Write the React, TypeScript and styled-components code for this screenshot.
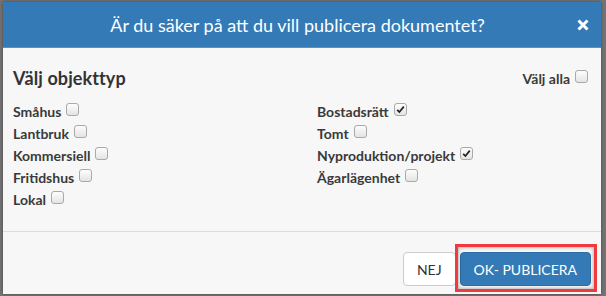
import React from "react";
import styled, { createGlobalStyle } from "styled-components";

const Global = createGlobalStyle`
  html, body { margin: 0; padding: 0; }
  body {
    width: 606px; height: 296px; overflow: hidden;
    background: #737373;
    font-family: Lato, "Open Sans", sans-serif;
  }
`;

const Overlay = styled.div`
  width: 606px;
  height: 296px;
  box-sizing: border-box;
  padding: 2px 5px 2px 3px;
  background: #737373;
`;

const Modal = styled.div`
  width: 598px;
  height: 292px;
  display: flex;
  flex-direction: column;
  background: #f7f7f7;
  box-shadow: 0 0 3px rgba(0,0,0,0.4);
`;

const Header = styled.div`
  height: 45px;
  flex: none;
  display: flex;
  align-items: center;
  padding: 0 12px 0 15px;
  background: #337ab7;
  border-bottom: 1px solid #5a92c4;
`;

const Title = styled.h4`
  flex: 1;
  margin: 0;
  text-align: center;
  color: #fff;
  font-size: 18px;
  font-weight: 400;
  line-height: 20px;
`;

const Close = styled.button`
  border: 0;
  background: none;
  padding: 0;
  width: 12px;
  height: 12px;
  display: flex;
  cursor: pointer;
`;

const Body = styled.div`
  flex: 1;
  padding: 19px 13px 0 10px;
`;

const TopRow = styled.div`
  display: flex;
  justify-content: space-between;
  align-items: center;
  height: 22px;
  margin-bottom: 11px;
`;

const Heading = styled.h3`
  margin: 0;
  font-size: 18px;
  font-weight: 700;
  color: #333;
  letter-spacing: 0.1px;
`;

const Columns = styled.div`
  display: grid;
  grid-template-columns: 304px 1fr;
`;

const Column = styled.div`
  display: flex;
  flex-direction: column;
`;

const Option = styled.label`
  display: flex;
  align-items: center;
  gap: 5px;
  height: 22px;
  font-size: 14px;
  font-weight: 700;
  color: #3a3a3a;
`;

const Box = styled.span<{ $checked?: boolean }>`
  width: 11px;
  height: 11px;
  border: 1px solid #a9a9a9;
  border-radius: 3px;
  background: linear-gradient(#fdfdfd, #e4e4e4);
  display: inline-flex;
  align-items: center;
  justify-content: center;
  margin-top: -3px;
  flex: none;
`;

const Footer = styled.div`
  flex: none;
  height: 63px;
  box-sizing: border-box;
  border-top: 1px solid #dcdcdc;
  display: flex;
  justify-content: flex-end;
  align-items: flex-start;
  gap: 4px;
  padding: 20px 10px 0 0;
`;

const Button = styled.button<{ $primary?: boolean }>`
  height: 34px;
  box-sizing: border-box;
  padding: 0 13px;
  font-family: Lato, sans-serif;
  font-size: 14px;
  border-radius: 4px;
  border: 1px solid ${(p) => (p.$primary ? "#2e6da4" : "#ccc")};
  background: ${(p) => (p.$primary ? "#337ab7" : "#fff")};
  color: ${(p) => (p.$primary ? "#fff" : "#333")};
  cursor: pointer;
`;

const Highlight = styled.span`
  position: relative;
  display: inline-flex;
  &::after {
    content: "";
    position: absolute;
    inset: -8px -6px -6px -5px;
    border: 3px solid #ef3a3f;
    box-shadow: inset 0 0 3px 1px rgba(0,0,0,0.25);
    pointer-events: none;
  }
`;

function Checkbox({ checked }: { checked?: boolean }) {
  return (
    <Box $checked={checked}>
      {checked && (
        <svg width="9" height="9" viewBox="0 0 9 9">
          <path d="M1.2 4.8 L3.4 7 L7.8 1.6" fill="none" stroke="#222" strokeWidth="1.7" />
        </svg>
      )}
    </Box>
  );
}

const left = ["Småhus", "Lantbruk", "Kommersiell", "Fritidshus", "Lokal"];
const right: [string, boolean][] = [
  ["Bostadsrätt", true],
  ["Tomt", false],
  ["Nyproduktion/projekt", true],
  ["Ägarlägenhet", false],
];

export default function App() {
  return (
    <>
      <Global />
      <Overlay>
        <Modal>
          <Header>
            <Title>Är du säker på att du vill publicera dokumentet?</Title>
            <Close aria-label="Stäng">
              <svg width="12" height="12" viewBox="0 0 12 12">
                <path d="M1.5 1.5 L10.5 10.5 M10.5 1.5 L1.5 10.5" stroke="#fff" strokeWidth="3" />
              </svg>
            </Close>
          </Header>
          <Body>
            <TopRow>
              <Heading>Välj objekttyp</Heading>
              <Option>
                Välj alla <Checkbox />
              </Option>
            </TopRow>
            <Columns>
              <Column>
                {left.map((l) => (
                  <Option key={l}>
                    {l} <Checkbox />
                  </Option>
                ))}
              </Column>
              <Column>
                {right.map(([l, c]) => (
                  <Option key={l}>
                    {l} <Checkbox checked={c} />
                  </Option>
                ))}
              </Column>
            </Columns>
          </Body>
          <Footer>
            <Button>NEJ</Button>
            <Highlight>
              <Button $primary>OK- PUBLICERA</Button>
            </Highlight>
          </Footer>
        </Modal>
      </Overlay>
    </>
  );
}
